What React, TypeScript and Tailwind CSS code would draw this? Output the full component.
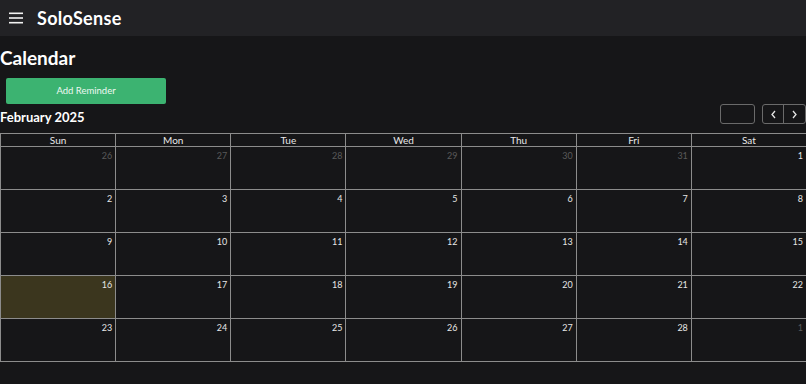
import React from "react";

const days = ["Sun", "Mon", "Tue", "Wed", "Thu", "Fri", "Sat"];

type Cell = { n: number; other: boolean; today?: boolean };

const weeks: Cell[][] = [
  [26, 27, 28, 29, 30, 31].map((n) => ({ n, other: true })).concat([{ n: 1, other: false }]),
  [2, 3, 4, 5, 6, 7, 8].map((n) => ({ n, other: false })),
  [9, 10, 11, 12, 13, 14, 15].map((n) => ({ n, other: false })),
  [16, 17, 18, 19, 20, 21, 22].map((n) => ({ n, other: false, today: n === 16 })),
  [23, 24, 25, 26, 27, 28].map((n) => ({ n, other: false })).concat([{ n: 1, other: true }]),
];

export default function App() {
  return (
    <div className="w-[806px] h-[384px] overflow-hidden bg-[#161618] text-white font-['Lato','Open_Sans',sans-serif]">
      {/* Top bar */}
      <header className="h-9 bg-[#222225] flex items-center">
        <svg width="14" height="12" viewBox="0 0 14 12" className="ml-[9px]">
          <rect x="0" y="0.5" width="14" height="1.6" fill="#f2f2f2" />
          <rect x="0" y="5.2" width="14" height="1.6" fill="#f2f2f2" />
          <rect x="0" y="9.9" width="14" height="1.6" fill="#f2f2f2" />
        </svg>
        <span className="ml-[14px] text-[18px] font-bold tracking-[0.3px]">SoloSense</span>
      </header>

      {/* Page */}
      <h1 className="mt-[10px] text-[19px] font-bold leading-[24px]">Calendar</h1>
      <button className="mt-[8px] ml-[6px] w-[160px] h-[26px] rounded-[2px] bg-[#3cb371] text-[9.5px] text-[#eef8f1]">
        Add Reminder
      </button>

      <div className="flex items-start justify-between h-[29px]">
        <h2 className="mt-[5px] text-[13px] font-bold leading-[16px]">February 2025</h2>
        <div className="flex items-center gap-[7px]">
          <div className="w-[35px] h-[20px] border border-[#6a6a6a] rounded-[3px]" />
          <div className="flex h-[20px] border border-[#6a6a6a] rounded-[3px]">
            <button className="w-[21px] flex items-center justify-center border-r border-[#6a6a6a]">
              <svg width="7" height="9" viewBox="0 0 7 9">
                <path d="M5 1 L2 4.5 L5 8" stroke="#e5e5e5" strokeWidth="1.3" fill="none" />
              </svg>
            </button>
            <button className="w-[21px] flex items-center justify-center">
              <svg width="7" height="9" viewBox="0 0 7 9">
                <path d="M2 1 L5 4.5 L2 8" stroke="#e5e5e5" strokeWidth="1.3" fill="none" />
              </svg>
            </button>
          </div>
        </div>
      </div>

      {/* Calendar grid */}
      <div className="w-[807px] border-t border-l border-[#8c8c8c]">
        <div className="grid grid-cols-7">
          {days.map((d) => (
            <div
              key={d}
              className="h-[13px] border-r border-b border-[#8c8c8c] text-[10px] leading-[12px] text-center text-[#e8e8e8]"
            >
              {d}
            </div>
          ))}
        </div>
        {weeks.map((w, i) => (
          <div key={i} className="grid grid-cols-7">
            {w.map((c, j) => (
              <div
                key={j}
                className={`h-[43px] border-r border-b border-[#8c8c8c] text-right pr-[3px] pt-[3px] text-[9px] leading-[11px] ${
                  c.today ? "bg-[#3b361e]" : ""
                } ${c.other ? "text-[#5a5a5a]" : "text-[#e6e6e6]"}`}
              >
                {c.n}
              </div>
            ))}
          </div>
        ))}
      </div>
    </div>
  );
}
